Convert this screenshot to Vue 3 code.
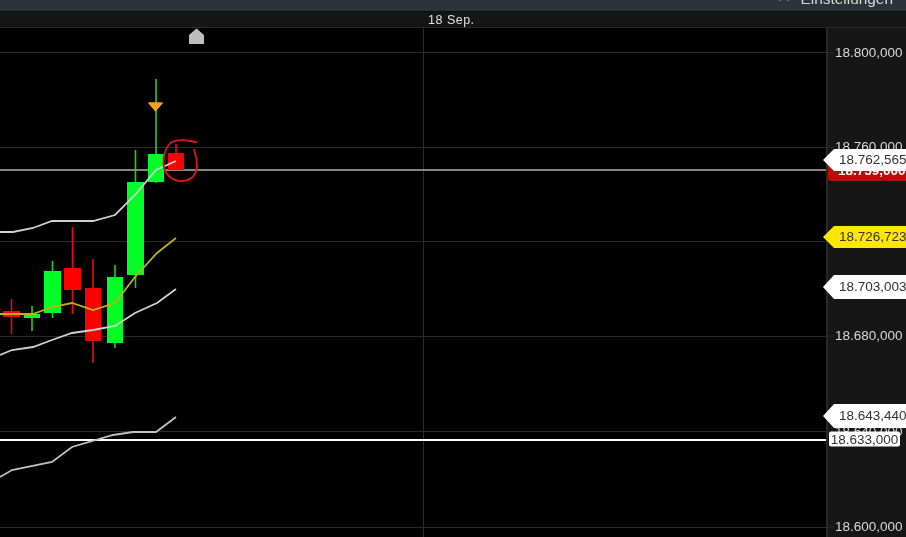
<script setup>
const GREEN = '#00ff26'
const RED = '#ff0000'
const candles = [
  { x: 3, w: 17, top: 311, bottom: 317, hi: 299, lo: 334, c: RED },
  { x: 24, w: 16, top: 314, bottom: 318, hi: 306, lo: 331, c: GREEN },
  { x: 44, w: 17, top: 271, bottom: 313, hi: 261, lo: 318, c: GREEN },
  { x: 64, w: 17, top: 268, bottom: 290, hi: 227, lo: 314, c: RED },
  { x: 85, w: 16, top: 288, bottom: 341, hi: 259, lo: 363, c: RED },
  { x: 107, w: 16, top: 277, bottom: 343, hi: 265, lo: 348, c: GREEN },
  { x: 127, w: 17, top: 182, bottom: 275, hi: 150, lo: 288, c: GREEN },
  { x: 148, w: 16, top: 154, bottom: 182, hi: 79, lo: 183, c: GREEN },
  { x: 168, w: 16, top: 153, bottom: 170, hi: 144, lo: 153, c: RED },
]
const grid = [52, 147, 241, 336, 431, 527]
const upper = '0,232 13,232 33,228 52,221 93,221 115,215 135,195 156,170 176,161'
const middle = '0,314 33,314 52,307 72,303 93,310 115,303 135,277 157,253 176,238'
const lower = '0,355 12,350 33,347 52,340 72,333 93,330 115,326 135,313 157,303 176,289'
const bottom = '0,477 12,470 52,462 72,447 113,435 133,432 156,432 176,417'
const axisTicks = [
  { t: '18.800,000', y: 52 },
  { t: '18.760,000', y: 146 },
  { t: '18.680,000', y: 335 },
  { t: '18.640,000', y: 431 },
  { t: '18.600,000', y: 526 },
]
const tags = [
  { t: '18.703,003', y: 287, cls: 'white tall' },
  { t: '18.643,440', y: 416, cls: 'white tall' },
  { t: '18.726,723', y: 237, cls: 'yellow' },
  { t: '18.762,565', y: 160, cls: 'white' },
]
// axis area starts at y = 28
const top = (y) => ({ top: y - 28 + 'px' })
</script>

<template>
  <div class="app">
    <header class="topbar">
      <svg class="star" width="12" height="12" viewBox="0 0 12 12">
        <path d="M6 -4 L7.6 -0.4 L11.5 0 L8.6 2.6 L9.5 6 L6 4.2 L2.5 6 L3.4 2.6 L0.5 0 L4.4 -0.4 Z" fill="none" stroke="#9a9da1" stroke-width="1.4" />
      </svg>
      <span class="settings">Einstellungen</span>
    </header>
    <div class="timebar"><span class="date">18 Sep.</span></div>
    <main class="chart">
      <div class="plot">
        <svg class="canvas" width="826" height="509" viewBox="0 28 826 509">
          <line v-for="y in grid" :key="y" x1="0" x2="826" :y1="y + 0.5" :y2="y + 0.5" stroke="#2a2a2a" />
          <line x1="423.5" x2="423.5" y1="28" y2="537" stroke="#2a2a2a" />
          <line x1="0" x2="826" y1="170" y2="170" stroke="#b0b0b0" stroke-width="1.4" />
          <line x1="0" x2="826" y1="440" y2="440" stroke="#ffffff" stroke-width="2" />

          <g v-for="c in candles" :key="c.x">
            <line :x1="c.x + c.w / 2" :x2="c.x + c.w / 2" :y1="c.hi" :y2="c.lo" :stroke="c.c === GREEN ? '#18d428' : '#ee0808'" stroke-width="1.6" />
            <rect :x="c.x" :y="c.top" :width="c.w" :height="c.bottom - c.top" :fill="c.c" />
          </g>

          <polyline :points="upper" fill="none" stroke="#d0d0d0" stroke-width="1.8" />
          <polyline :points="lower" fill="none" stroke="#d0d0d0" stroke-width="1.8" />
          <polyline :points="bottom" fill="none" stroke="#c0c0c0" stroke-width="1.8" />
          <polyline :points="middle" fill="none" stroke="#c4ae14" stroke-width="1.8" />

          <path d="M149 103 H162 L155.5 110.5 Z" fill="#f7a11e" stroke="#f7a11e" stroke-width="1.6" stroke-linejoin="round" />
          <path d="M189 44 V35 L196.5 28.5 L204 35 V44 Z" fill="#bdbdbd" />
          <path d="M197 142.5 C190 140 178 139 172 142 C166 146 163 155 163.5 164 C164 174 172 181 181 181 C191 181 197 175 197 165 C197 158 195 153 194 149" fill="none" stroke="#d8141e" stroke-width="1.9" />
        </svg>
      </div>
      <aside class="axis">
        <span v-for="a in axisTicks" :key="a.t" class="tick" :style="top(a.y)">{{ a.t }}</span>
        <span class="redtag" :style="top(171)">18.759,000</span>
        <span v-for="g in tags" :key="g.t" class="tag" :class="g.cls" :style="top(g.y)">{{ g.t }}</span>
        <span class="box" :style="top(438.5)">18.633,000</span>
      </aside>
    </main>
  </div>
</template>

<style>
html, body { margin: 0; background: #000; }
</style>

<style scoped>
.app {
  width: 906px;
  height: 537px;
  overflow: hidden;
  display: flex;
  flex-direction: column;
  background: #000;
  font-family: "Liberation Sans", Arial, sans-serif;
  filter: blur(0.45px);
}
.topbar {
  flex: none;
  height: 11px;
  border-bottom: 1px solid #0b0c0d;
  background: #2e3339;
  display: flex;
  justify-content: flex-end;
  align-items: flex-end;
  overflow: hidden;
  padding-right: 13px;
}
.star { flex: none; margin-right: 11px; margin-bottom: 5px; }
.settings {
  color: #d5d7d9;
  font-size: 15.4px;
  line-height: 17px;
  margin-bottom: 4px;
}
.timebar {
  flex: none;
  height: 15px;
  background: #161616;
  border-bottom: 1px solid #2a2a2a;
  padding-left: 428px;
}
.date {
  color: #e0e0e0;
  font-size: 12.5px;
  line-height: 16px;
  letter-spacing: 0.5px;
  display: block;
}
.chart { flex: 1; display: flex; min-height: 0; }
.plot { flex: none; width: 826px; background: #000; }
.canvas { display: block; }
.axis {
  flex: 1;
  position: relative;
  background: #161616;
  border-left: 2px solid #282828;
  font-size: 13.5px;
}
.tick {
  position: absolute;
  left: 7px;
  transform: translateY(-50%);
  color: #d8d8d8;
  white-space: nowrap;
}
.tick::before {
  content: "";
  position: absolute;
  left: -7px;
  top: 50%;
  width: 6px;
  height: 1px;
  background: #2a2a2a;
}
.tag {
  position: absolute;
  left: -5px;
  width: 83px;
  height: 22px;
  line-height: 22px;
  margin-top: -11px;
  padding-left: 16px;
  white-space: nowrap;
  box-sizing: border-box;
  clip-path: polygon(0 50%, 11px 0, 100% 0, 100% 100%, 11px 100%);
}
.tag.tall { height: 24px; line-height: 24px; margin-top: -12px; }
.tag.white { background: #fff; color: #333; }
.tag.yellow { background: #ffe600; color: #333; }
.redtag {
  position: absolute;
  left: 0;
  width: 78px;
  height: 21px;
  margin-top: -11px;
  line-height: 21px;
  padding-left: 10px;
  box-sizing: border-box;
  background: #bf0a0a;
  color: #fff;
  font-weight: 700;
  border-radius: 0 0 0 3px;
  white-space: nowrap;
  overflow: hidden;
}
.box {
  position: absolute;
  left: 1px;
  transform: translateY(-50%);
  width: 71px;
  height: 15px;
  line-height: 15px;
  text-align: center;
  background: #fff;
  color: #333;
  border-radius: 2px;
  white-space: nowrap;
}
</style>
